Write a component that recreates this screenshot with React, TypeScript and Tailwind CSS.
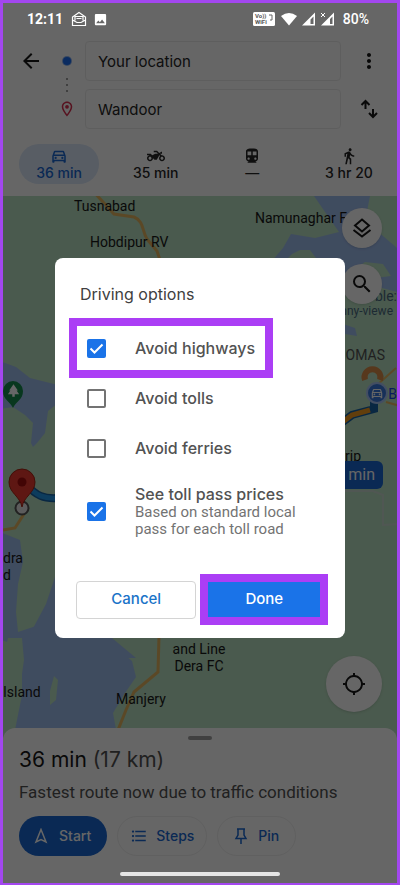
import React, { useState } from 'react';
import {
  MdArrowBack,
  MdDirectionsTransit,
  MdDirectionsWalk,
  MdFormatListBulleted,
  MdImage,
  MdLocationSearching,
  MdMoreVert,
  MdOutlineDirectionsCar,
  MdOutlineLocationOn,
  MdPark,
  MdSearch,
  MdTwoWheeler,
} from 'react-icons/md';

function StatusBar() {
  return (
    <div className="relative z-20 flex h-8 items-center justify-between pl-6 pr-7 text-white">
      <div className="flex items-center gap-1.5">
        <span className="font-[Roboto,sans-serif] text-sm font-bold">12:11</span>
        <svg className="ml-0.5" width="16" height="16" viewBox="0 0 16 16" fill="none" stroke="currentColor" aria-hidden="true">
          <path d="M1.500 14.500V6L8 1.500 14.500 6v8.500zM1.500 9 6 11.500h4L14.500 9M4 9.500V5.500h8v4M5.500 7.500h5" strokeWidth="1.200" />
        </svg>
        <MdImage size={15} />
      </div>
      <div className="flex items-center gap-1">
        <svg width="22" height="14" viewBox="0 0 22 14" aria-hidden="true">
          <rect width="22" height="14" rx="1.500" fill="#fff" />
          <text x="2" y="6" fontSize="6" fontWeight="700" fontFamily="Roboto, sans-serif" fill="#555">Vo))</text>
          <text x="2" y="12" fontSize="6" fontWeight="700" fontFamily="Roboto, sans-serif" fill="#555">WiFi</text>
          <path d="M16 3h3v5h-2" fill="none" stroke="#666" strokeWidth="1" />
        </svg>
        <svg className="ml-0.5" width="16" height="14" viewBox="0 0 16 14" fill="#fff" aria-hidden="true">
          <path d="M0 4Q8-2 16 4L8 13.500z" />
        </svg>
        <svg width="15" height="14" viewBox="0 0 15 14" fill="#fff" aria-hidden="true">
          <path d="M1 13.500 14 .500v13z M9.500 7.500v4.500h3V4.500z" fillRule="evenodd" />
        </svg>
        <svg width="15" height="14" viewBox="0 0 15 14" fill="#fff" aria-hidden="true">
          <path d="M1 13.500 14 .500v13z M10 7v5h2.500V4.500z" fillRule="evenodd" />
          <path d="m1 1 4 4M5 1 1 5" stroke="#fff" strokeWidth="1" />
        </svg>
        <span className="pl-1 font-[Roboto,sans-serif] text-sm font-medium">80%</span>
      </div>
    </div>
  );
}

const modes = [
  { id: 'car', label: '36 min', icon: MdOutlineDirectionsCar },
  { id: 'bike', label: '35 min', icon: MdTwoWheeler },
  { id: 'transit', label: '—', icon: MdDirectionsTransit },
  { id: 'walk', label: '3 hr 20', icon: MdDirectionsWalk },
];

function RouteHeader() {
  const [mode, setMode] = useState('car');
  const [from, setFrom] = useState('Your location');
  const [to, setTo] = useState('Wandoor');

  return (
    <header className="pb-3 pt-1.5">
      <div className="flex pl-4 pr-4">
        <div className="flex h-10 items-center">
          <button aria-label="Back" className="text-neutral-900">
            <MdArrowBack size={24} />
          </button>
        </div>
        <div className="ml-3 flex w-6 flex-col items-center">
          <div className="flex h-10 items-center">
            <span className="size-2 rounded-full bg-[#1a6cf0] ring-1 ring-[#8fb4f0]" />
          </div>
          <div className="flex h-2 flex-col items-center justify-center gap-1">
            <span className="size-0.5 shrink-0 bg-neutral-400" />
            <span className="size-0.5 shrink-0 bg-neutral-400" />
            <span className="size-0.5 shrink-0 bg-neutral-400" />
          </div>
          <div className="flex h-10 items-center text-[#d93050]">
            <MdOutlineLocationOn size={18} />
          </div>
        </div>
        <div className="ml-1.5 mr-4 flex min-w-0 flex-1 flex-col gap-2">
          <input
            aria-label="Starting point"
            value={from}
            onChange={(e) => setFrom(e.target.value)}
            className="h-10 w-full rounded border border-[#ececec] px-3 text-[15px] text-neutral-800"
          />
          <input
            aria-label="Destination"
            value={to}
            onChange={(e) => setTo(e.target.value)}
            className="h-10 w-full rounded border border-[#ececec] px-3 text-[15px] text-neutral-800"
          />
        </div>
        <div className="flex flex-col items-center gap-2 text-neutral-900">
          <button aria-label="More options" className="flex h-10 items-center">
            <MdMoreVert size={24} />
          </button>
          <button aria-label="Swap start and destination" className="flex h-10 items-center">
            <svg width="20" height="22" viewBox="0 0 20 22" fill="none" stroke="currentColor" strokeWidth="2">
              <path d="M6.500 11V3M2.500 7l4-4 4 4M14 11v8M10 15l4 4 4-4" />
            </svg>
          </button>
        </div>
      </div>

      <div className="mt-[15px] flex justify-between pl-4 pr-2">
        {modes.map(({ id, label, icon: Icon }) => (
          <button
            key={id}
            onClick={() => setMode(id)}
            className={`flex h-10 w-20 flex-col items-center justify-center rounded-full text-sm leading-4 font-medium ${
              mode === id ? 'bg-[#dbe8fb] text-[#1967d2]' : 'text-neutral-800'
            }`}
          >
            <Icon size={18} />
            {label}
          </button>
        ))}
      </div>
    </header>
  );
}

function MapView() {
  return (
    <div className="relative min-h-[532px] flex-1 overflow-hidden bg-[#b9e0c2] font-[Roboto,sans-serif] text-sm leading-[17px] text-neutral-900">
      <svg
        className="absolute inset-0 size-full"
        viewBox="3 196 394 532"
        preserveAspectRatio="xMidYMid slice"
        aria-hidden="true"
      >
        <g fill="#9fbdee">
          <path d="M0 361l16 6 14 11 28 7v18l-10 8-3 22-8 10-4 4-2-4 2-20-8-8-12-8-13 2z" />
          <path d="M0 532l20 8 3 22-5 22-2 28 2 20 24-8 10-8 6-20v30l54 18 20 17 4 16-11 16-12 20 4 22H14l8-40V660l-4-14-16-6z" />
          <path d="M58 568v70h54l24 20H54l-24-24 16-30z" />
          <path d="M314 196h56l-4 20 10 14 21 18v44l-22-6-30 6v42l12 2-2-8-12-4V262h-72l12-14 8-14 24 4 24-6z" />
        </g>
        <g fill="#b9e0c2">
          <path d="M8 638h14l2 22-4 28-6 40H3v-70zM54 676l4 4-2 20-6 5v-14z" />
          <path d="M292 254l8-4h10l6 8h-28zM345 276l20-14 18 2 8 12-46 6z" />
        </g>
        <g fill="none" stroke="#e3b560" strokeWidth="3">
          <path d="M92 190l22 24 20 3c10 4 8 14 13 22l10 12 4 12" />
          <path d="M159 636l-1 36-24 20-8 18-8 20M3 530l12-2 9-14" />
          <path d="M376 386l20-18M386 402l14 4" strokeWidth="2" />
        </g>
        <path d="M345 491h28l10 4v30l16-1" fill="none" stroke="#c9d9cf" strokeWidth="2" />
        <path d="M26 484c10 12 18 15 32 14" fill="none" stroke="#1763a5" strokeWidth="8" />
        <path d="M26 484c10 12 18 15 32 14" fill="none" stroke="#2196e8" strokeWidth="5" />
        <path d="M340 424l12-9 22-6v-14" fill="none" stroke="#1763a5" strokeWidth="8" />
        <path d="M340 424l12-9 18-5" fill="none" stroke="#f69b1e" strokeWidth="5" />
        <path d="M365 380a8 8 0 1115 0" fill="none" stroke="#d98c4a" strokeWidth="6" />
        <circle cx="22" cy="508" r="6.500" fill="#e6e6e6" stroke="#555" strokeWidth="2" />
        <path d="M22 507c-2-11-13-14-13-25a13 13 0 0126 0c0 11-11 14-13 25z" fill="#ea3a30" stroke="#a52714" />
        <circle cx="22" cy="482" r="4.500" fill="#a50e0e" />
        <path d="M13 408c-3-7-10-8-10-17a10 10 0 0120 0c0 9-7 10-10 17z" fill="#168b4b" />
        <circle cx="377" cy="393" r="10" fill="#3b78dc" stroke="#a9c4f5" strokeWidth="2" />
      </svg>

      <MdPark size={15} className="absolute left-[3px] top-[187px] text-white" />
      <MdOutlineDirectionsCar size={14} className="absolute right-[13px] top-[190px] text-white" />
      <span className="absolute left-[71px] top-0.5">Tusnabad</span>
      <span className="absolute left-[87px] top-[38px]">Hobdipur RV</span>
      <span className="absolute right-[50px] top-[14px]">Namunaghar F</span>
      <span className="absolute right-0 top-[92px] text-[#4a6a80]">ble:</span>
      <span className="absolute right-1 top-[107px] text-xs leading-4 text-[#4a6a80]">enny-viewe</span>
      <span className="absolute right-[12px] top-[151px] text-neutral-600">THOMAS</span>
      <span className="absolute right-0 top-[190px] text-blue-700">B</span>
      <span className="absolute right-[36px] top-[252px]">trip</span>
      <span className="absolute right-[14px] top-[265px] flex h-7 w-16 items-center justify-end rounded-md bg-[#1967d2] pr-2 text-base text-white">
        min
      </span>
      <span className="absolute left-0 top-[354px]">dra</span>
      <span className="absolute left-0 top-[371px]">d</span>
      <span className="absolute left-0 top-[488px]">Island</span>
      <span className="absolute left-[113px] top-[495px]">Manjery</span>
      <span className="absolute left-[168px] top-[445px] w-14 whitespace-nowrap text-center">
        and Line
        <br />
        Dera FC
      </span>

      <button
        aria-label="Map layers"
        className="absolute right-[15px] top-[12px] flex size-10 items-center justify-center rounded-full bg-white shadow"
      >
        <svg width="20" height="22" viewBox="0 0 20 22" fill="none" stroke="currentColor" strokeWidth="2">
          <path d="M10 2.500 17 8.500 10 14.500 3 8.500zM1.500 13 10 19.500 18.500 13" />
        </svg>
      </button>
      <button
        aria-label="Search along route"
        className="absolute right-[15px] top-[68px] flex size-10 items-center justify-center rounded-full bg-white shadow"
      >
        <MdSearch size={24} />
      </button>
      <button
        aria-label="My location"
        className="absolute bottom-4 right-[15px] flex size-14 items-center justify-center rounded-full bg-white shadow"
      >
        <MdLocationSearching size={24} />
      </button>
    </div>
  );
}

function RouteSheet() {
  return (
    <section className="bg-[#b9e0c2]">
      <div className="flex flex-col rounded-t-xl bg-white px-4 pt-2">
        <div className="h-1 w-6 self-center rounded-full bg-neutral-400" />
        <h1 className="mt-2 text-[21px] leading-6 text-neutral-900">
          36 min <span className="text-neutral-600">(17 km)</span>
        </h1>
        <p className="mt-2 font-[Roboto,sans-serif] text-[17px] leading-6 text-neutral-600">
          Fastest route now due to traffic conditions
        </p>
        <div className="mt-3 flex gap-2.5 text-sm font-medium text-[#1967d2]">
          <button className="flex h-10 items-center gap-2.5 rounded-full bg-[#1967d2] pl-3.5 pr-4 text-white">
            <svg width="16" height="16" viewBox="0 0 16 16" fill="none" stroke="currentColor" strokeWidth="1.500">
              <path d="M8 1.500 13 14 8 11.500 3 14z" />
            </svg>
            Start
          </button>
          <button className="flex h-10 items-center gap-2 rounded-full border border-[#f0f0f0] px-3">
            <MdFormatListBulleted size={18} />
            Steps
          </button>
          <button className="flex h-10 items-center gap-2.5 rounded-full border border-[#f0f0f0] px-4">
            <svg width="14" height="18" viewBox="0 0 14 18" fill="none" stroke="currentColor" strokeWidth="1.500">
              <path d="M3 2h8M4 2v6l-2 3.500h10L10 8V2M7 11.500V17" />
            </svg>
            Pin
          </button>
        </div>
        <div className="relative z-20 mb-[7px] mt-4 h-1 w-40 self-center rounded-full bg-neutral-200" />
      </div>
    </section>
  );
}

interface OptionProps {
  label: string;
  hint?: string;
  checked?: boolean;
  className: string;
}

function Option({ label, hint, checked = false, className }: OptionProps) {
  return (
    <label className={`flex items-center gap-[29px] ${className}`}>
      <span className="grid shrink-0 place-items-center">
        <input
          type="checkbox"
          defaultChecked={checked}
          className="peer col-start-1 row-start-1 size-[19px] appearance-none rounded-xs border-2 border-neutral-500 checked:border-[#1a73e8] checked:bg-[#1a73e8]"
        />
        <svg
          className="pointer-events-none invisible col-start-1 row-start-1 peer-checked:visible"
          width="15"
          height="15"
          viewBox="0 0 15 15"
          fill="none"
          stroke="#fff"
          strokeWidth="2"
        >
          <path d="m1.500 7.500 4 4 8-8" />
        </svg>
      </span>
      <span>
        <span className="block text-base leading-5 font-medium text-neutral-600">{label}</span>
        {hint && (
          <span className="block font-[Roboto,sans-serif] text-[15px] leading-[17px] text-neutral-500">
            {hint}
          </span>
        )}
      </span>
    </label>
  );
}

function DrivingOptions() {
  return (
    <div className="absolute inset-0 z-10 flex items-center justify-center bg-black/60 px-13 pt-2.5">
      <div
        role="dialog"
        aria-modal="true"
        aria-labelledby="driving-options"
        className="w-full max-w-80 rounded-lg bg-white pb-[13px] pt-6"
      >
        <h2 id="driving-options" className="px-[25px] text-base leading-6 text-neutral-700">
          Driving options
        </h2>
        <div className="mt-3 flex flex-col items-start">
          <Option
            label="Avoid highways"
            checked
            className="ml-3.5 h-[60px] border-8 border-[#ab3ef5] px-2.5"
          />
          <Option label="Avoid tolls" className="h-10 px-8" />
          <Option label="Avoid ferries" className="mt-2.5 h-10 px-8" />
          <Option
            label="See toll pass prices"
            hint="Based on standard local pass for each toll road"
            checked
            className="mt-4 pl-8 pr-10"
          />
        </div>
        <div className="mt-9 grid grid-cols-[120fr_127fr] items-center gap-1 pl-[21px] pr-[17px] text-[15px] font-medium">
          <button className="h-[38px] rounded border border-neutral-300 text-[#1a73c8]">Cancel</button>
          <button className="h-[51px] border-8 border-[#ab3ef5] bg-[#1a73e8] text-white">Done</button>
        </div>
      </div>
    </div>
  );
}

export default function App() {
  return (
    <div className="relative flex min-h-screen flex-col border-3 border-[#a347ef] bg-white font-[Inter,sans-serif]">
      <StatusBar />
      <RouteHeader />
      <MapView />
      <RouteSheet />
      <DrivingOptions />
    </div>
  );
}
